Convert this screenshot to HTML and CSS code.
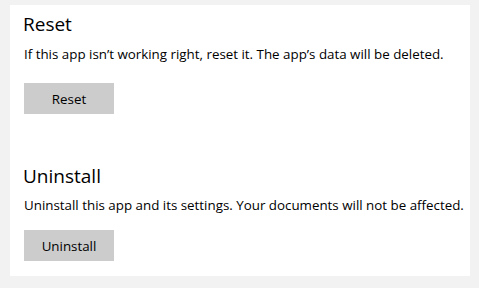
FILE: index.html
```html
<!DOCTYPE html>
<html lang="en">
<head>
    <meta charset="UTF-8">
    <title>Reset and uninstall</title>
    <link rel="stylesheet" href="styles.css">
</head>
<body>
    <div class="panel">
        <section class="group">
            <h2>Reset</h2>
            <p>If this app isn’t working right, reset it. The app’s data will be deleted.</p>
            <button>Reset</button>
        </section>

        <section class="group uninstall">
            <h2>Uninstall</h2>
            <p>Uninstall this app and its settings. Your documents will not be affected.</p>
            <button>Uninstall</button>
        </section>
    </div>
</body>
</html>
```

FILE: styles.css
```css
body {
    font-family: "Open Sans", "Noto Sans", sans-serif;
    margin: 0;
    padding: 5px 9px 12px 10px;
    background-color: #f2f2f2;
    color: #000;
}
.panel {
    background-color: #fff;
    padding: 5px 14px 15px 14px;
}
.group {
    display: flex;
    flex-direction: column;
    align-items: flex-start;
}
.uninstall {
    margin-top: 48px;
}
h2 {
    font-size: 19px;
    font-weight: normal;
    line-height: 28px;
    margin: 0 0 0 -1px;
}
p {
    font-size: 13.35px;
    line-height: 20px;
    white-space: nowrap;
    margin: 6px 0 0 0;
}
.uninstall p {
    margin-top: 5px;
}
button {
    font-family: inherit;
    font-size: 13.35px;
    color: #000;
    background-color: #cccccc;
    border: none;
    width: 90px;
    height: 31px;
    padding: 0;
    margin-top: 19px;
}
.uninstall button {
    margin-top: 15px;
}
```
